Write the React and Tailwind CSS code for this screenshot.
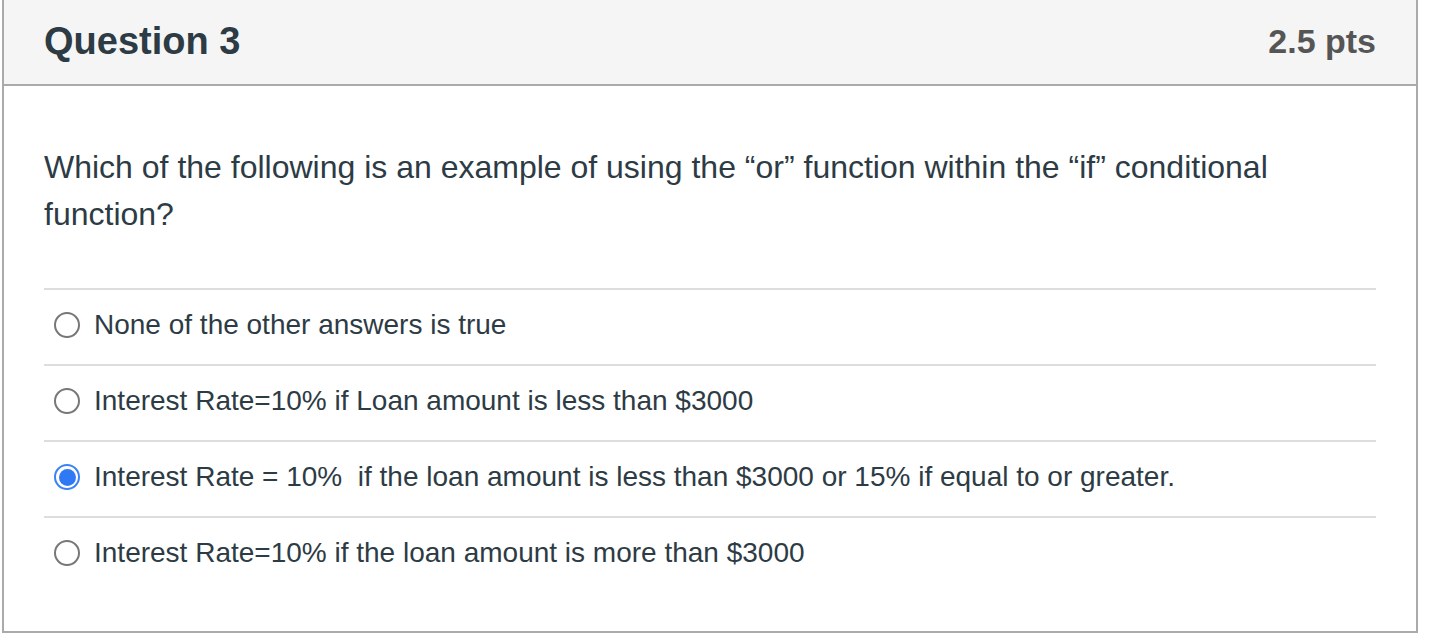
import React, { useState } from "react";

const answers = [
  "None of the other answers is true",
  "Interest Rate=10% if Loan amount is less than $3000",
  "Interest Rate = 10%\u00a0 if the loan amount is less than $3000 or 15% if equal to or greater.",
  "Interest Rate=10% if the loan amount is more than $3000",
];

const Radio = ({ checked }) =>
  checked ? (
    <span className="flex h-[26px] w-[26px] shrink-0 items-center justify-center rounded-full border-2 border-[#3b82f6]">
      <span className="h-[17px] w-[17px] rounded-full bg-[#2f7af4]" />
    </span>
  ) : (
    <span className="h-[26px] w-[26px] shrink-0 rounded-full border-2 border-[#777]" />
  );

export default function App() {
  const [selected, setSelected] = useState(2);

  return (
    <div className="min-h-[636px] bg-white font-['Liberation_Sans',Arial,sans-serif] text-[#2d3b45]">
      <div className="ml-[2px] w-[1416px] border-x-2 border-b-2 border-[#aaa]">
        <div className="flex h-[86px] items-center justify-between border-b-2 border-[#aaa] bg-[#f5f5f5] px-[40px] pb-[2px]">
          <h2 className="text-[38px] font-bold">Question 3</h2>
          <span className="text-[34px] font-bold text-[#555]">2.5 pts</span>
        </div>

        <div className="px-[40px] pt-[58px] pb-[39px]">
          <p className="mb-[50px] pr-[40px] text-[32px] leading-[47px]">
            Which of the following is an example of using the “or” function within the “if” conditional function?
          </p>

          <div>
            {answers.map((text, i) => (
              <label
                key={i}
                onClick={() => setSelected(i)}
                className="flex h-[76px] cursor-pointer items-center gap-[14px] border-t-2 border-[#ddd] pb-[4px] pl-[10px] text-[28px]"
              >
                <Radio checked={selected === i} />
                <span>{text}</span>
              </label>
            ))}
          </div>
        </div>
      </div>
    </div>
  );
}
